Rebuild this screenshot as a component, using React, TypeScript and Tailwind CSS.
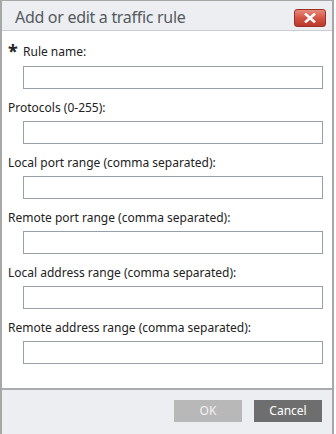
import React from "react";

const fields = [
  "Protocols (0-255):",
  "Local port range (comma separated):",
  "Remote port range (comma separated):",
  "Local address range (comma separated):",
  "Remote address range (comma separated):",
];

export default function App() {
  return (
    <div
      className="w-[336px] h-[434px] bg-white overflow-hidden"
      style={{ fontFamily: '"Noto Sans", "DejaVu Sans", sans-serif' }}
    >
      <div className="w-[334px] h-[434px] flex flex-col border-l-2 border-r-2 border-t border-[#a7a7a7] bg-white">
        {/* Title bar */}
        <div className="h-[30px] shrink-0 bg-[#eceef1] border-b border-[#c9ccd0] flex items-center justify-between pl-[13px] pr-[6px]">
          <span className="text-[16px] tracking-[-0.3px] text-[#555a60] leading-none pt-[2px]">
            Add or edit a traffic rule
          </span>
          <button className="w-[32px] h-[18px] mt-[4px] rounded-[3px] border border-[#9c3024] bg-gradient-to-b from-[#e58a7c] via-[#d35444] to-[#b93a2c] flex items-center justify-center">
            <svg width="12" height="10" viewBox="0 0 12 10">
              <path d="M2 1.5 L10 8.5 M10 1.5 L2 8.5" stroke="#fff" strokeWidth="2.6" strokeLinecap="square" />
            </svg>
          </button>
        </div>

        {/* Body */}
        <div className="flex-1 flex flex-col pl-[6px] pr-[10px] pt-[12px]">
          <div className="flex flex-col">
            <div className="flex items-center h-[18px] text-[12px] text-[#222]">
              <span className="text-[18px] font-bold leading-none w-[15px] -mt-[2px]">*</span>
              <span className="leading-none">Rule name:</span>
            </div>
            <div className="pl-[15px] mt-[5px]">
              <input className="block w-[300px] h-[23px] border border-[#97a0aa] bg-white outline-none" />
            </div>
          </div>
          {fields.map((f) => (
            <div key={f} className="flex flex-col mt-[11px]">
              <div className="h-[16px] text-[12px] text-[#222] leading-[16px]">{f}</div>
              <div className="pl-[15px] mt-[5px]">
                <input className="block w-[300px] h-[23px] border border-[#97a0aa] bg-white outline-none" />
              </div>
            </div>
          ))}
        </div>

        {/* Footer */}
        <div className="h-[46px] shrink-0 bg-[#eceef1] border-t-2 border-[#a9abae] flex items-start justify-end gap-[12px] pr-[10px] pt-[10px]">
          <button className="w-[68px] h-[22px] bg-[#b8b8b8] text-[#f2f2f2] text-[12px]">OK</button>
          <button className="w-[68px] h-[22px] bg-[#6e6e6e] text-white text-[12px]">Cancel</button>
        </div>
      </div>
    </div>
  );
}
